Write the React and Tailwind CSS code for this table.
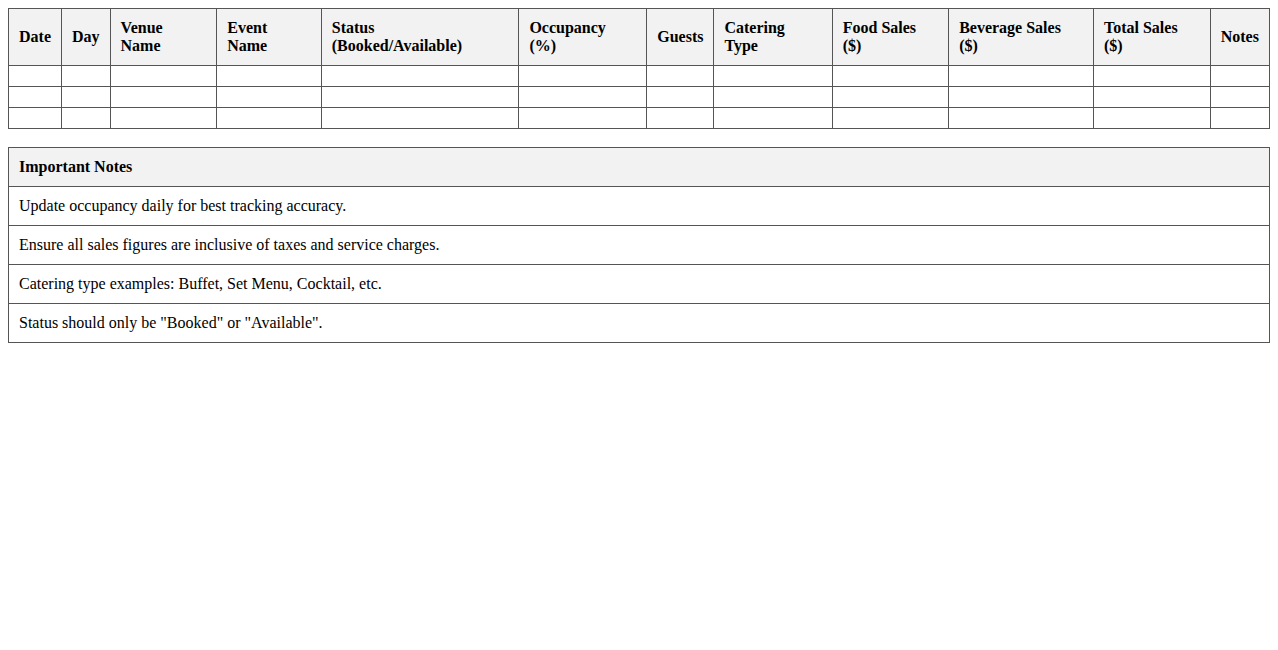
const headers = [
  "Date",
  "Day",
  "Venue Name",
  "Event Name",
  "Status (Booked/Available)",
  "Occupancy (%)",
  "Guests",
  "Catering Type",
  "Food Sales ($)",
  "Beverage Sales ($)",
  "Total Sales ($)",
  "Notes",
];

const notes = [
  "Update occupancy daily for best tracking accuracy.",
  "Ensure all sales figures are inclusive of taxes and service charges.",
  "Catering type examples: Buffet, Set Menu, Cocktail, etc.",
  'Status should only be "Booked" or "Available".',
];

const App = () => {
  return (
    <div className="p-2 font-['Liberation_Serif',serif] text-base text-black bg-white min-h-screen">
      <table className="w-full border-collapse mb-[18px]">
        <thead>
          <tr>
            {headers.map((h, idx) => (
              <th
                key={idx}
                className="border border-[#555] bg-[#f2f2f2] p-[10px] text-left font-bold leading-[18px]"
              >
                {h}
              </th>
            ))}
          </tr>
        </thead>
        <tbody>
          {[0, 1, 2].map((r) => (
            <tr key={r}>
              {headers.map((_, idx) => (
                <td key={idx} className="border border-[#555] p-[10px]"></td>
              ))}
            </tr>
          ))}
        </tbody>
      </table>

      {/* Notes */}
      <table className="w-full border-collapse">
        <thead>
          <tr>
            <th className="border border-[#555] bg-[#f2f2f2] p-[10px] text-left font-bold leading-[18px]">
              Important Notes
            </th>
          </tr>
        </thead>
        <tbody>
          {notes.map((n, idx) => (
            <tr key={idx}>
              <td className="border border-[#555] p-[10px] leading-[18px]">{n}</td>
            </tr>
          ))}
        </tbody>
      </table>
    </div>
  );
};

export default App;
